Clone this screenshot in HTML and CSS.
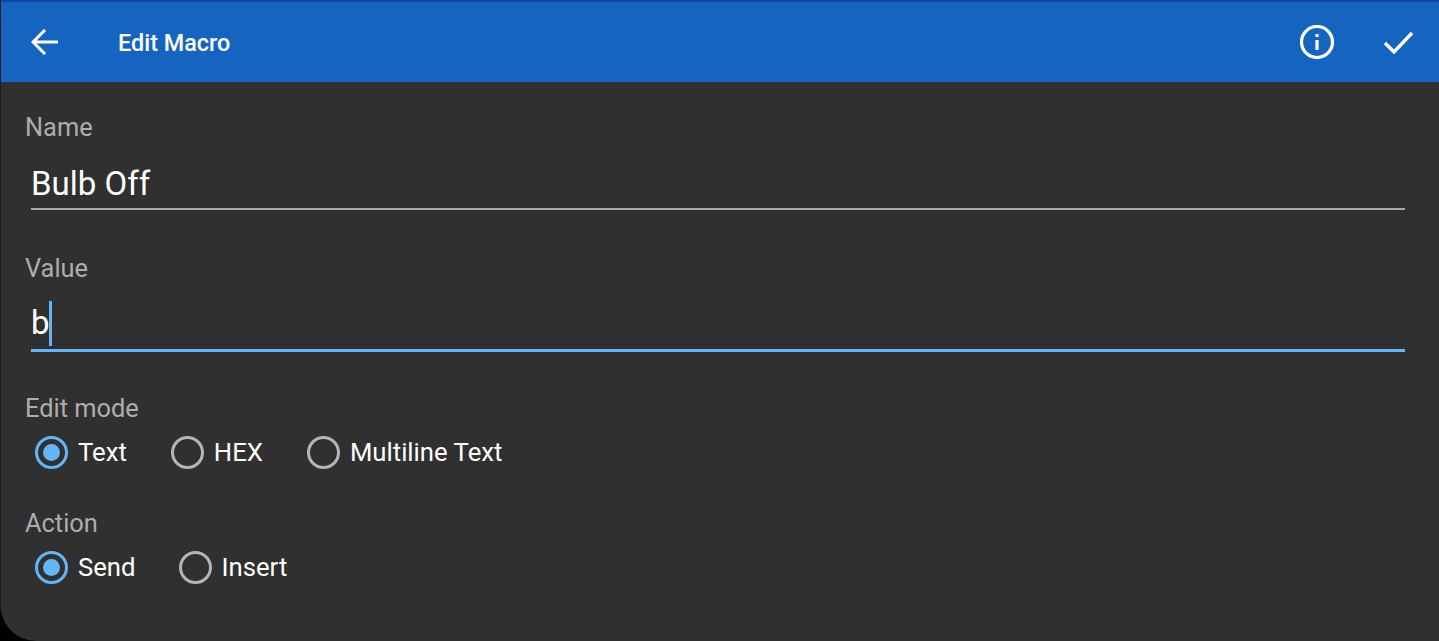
FILE: index.html
```html
<!DOCTYPE html>
<html lang="en">
<head>
  <meta charset="UTF-8">
  <meta name="viewport" content="width=device-width, initial-scale=1.0">
  <title>Edit Macro</title>
  <link rel="stylesheet" href="styles.css">
</head>
<body>
  <div class="screen">
    <header class="toolbar">
      <svg class="icon back" viewBox="0 0 28 28"><path d="M27 14H3M14 2L2 14l12 12"/></svg>
      <h1>Edit Macro</h1>
      <svg class="icon info" viewBox="0 0 34 34"><circle cx="17" cy="17" r="15.5"/><path d="M17 15v10"/><path d="M17 9v3"/></svg>
      <svg class="icon check" viewBox="0 0 30 24"><path d="M2 13l9 9L29 3"/></svg>
    </header>

    <main class="form">
      <section class="field">
        <label>Name</label>
        <div class="input">Bulb Off</div>
      </section>

      <section class="field">
        <label>Value</label>
        <div class="input focused">b<span class="caret"></span></div>
      </section>

      <section class="group">
        <label>Edit mode</label>
        <div class="radios">
          <div class="radio checked"><span class="dot"></span>Text</div>
          <div class="radio"><span class="dot"></span>HEX</div>
          <div class="radio"><span class="dot"></span>Multiline Text</div>
        </div>
      </section>

      <section class="group">
        <label>Action</label>
        <div class="radios tight">
          <div class="radio checked"><span class="dot"></span>Send</div>
          <div class="radio"><span class="dot"></span>Insert</div>
        </div>
      </section>
    </main>
  </div>
</body>
</html>
```

FILE: styles.css
```css
html, body {
  margin: 0;
  padding: 0;
  height: 100%;
  background: #000;
  overflow: hidden;
}
.screen {
  width: 1439px;
  height: 641px;
  box-sizing: border-box;
  background: #303030;
  border-bottom-left-radius: 36px;
  border-left: 1px solid #1c1c1c;
  font-family: Roboto, sans-serif;
  color: #fff;
  overflow: hidden;
}
.toolbar {
  height: 80px;
  border-top: 2px solid #0d47a1;
  background: #1565c0;
  display: flex;
  align-items: center;
  margin-left: -1px;
}
.toolbar h1 {
  margin: 2px 0 0 59px;
  font-size: 23.4px;
  font-weight: 500;
  flex: 1;
}
.icon {
  fill: none;
  stroke: #fff;
  stroke-width: 2;
}
.back {
  width: 28px;
  height: 28px;
  margin-left: 31px;
  stroke-width: 3;
}
.info {
  width: 34px;
  height: 34px;
  stroke-width: 3.2;
}
.check {
  width: 30px;
  height: 24px;
  margin: 0 26px 0 49px;
  stroke-width: 3.4;
}
.form {
  padding: 30px 34px 0 24px;
}
label {
  display: block;
  font-size: 25.4px;
  line-height: 30px;
  color: #adadad;
}
.field {
  margin-bottom: 43px;
}
.field + .field {
  margin-bottom: 41px;
}
.input {
  margin: 16px 0 0 6px;
  height: 50px;
  font-size: 33px;
  border-bottom: 2px solid #aaa;
  display: flex;
  align-items: center;
}
.input.focused {
  height: 54px;
  margin-top: 12px;
  border-bottom: 3px solid #64b5f6;
}
.caret {
  width: 3px;
  height: 45px;
  margin: 2px 0 0 -1px;
  background: #64b5f6;
}
.group {
  margin-bottom: 39px;
}
.radios {
  display: flex;
  gap: 44px;
  margin: 12px 0 0 10px;
}
.radios.tight {
  gap: 43px;
}
.radio {
  display: flex;
  align-items: center;
  gap: 10px;
  height: 34px;
  font-size: 25.7px;
}
.dot {
  width: 33px;
  height: 33px;
  box-sizing: border-box;
  border: 3px solid #b5b5b5;
  border-radius: 50%;
  padding: 5px;
  background-clip: content-box;
}
.radio.checked .dot {
  border-color: #64b5f6;
  background-color: #64b5f6;
}
```
